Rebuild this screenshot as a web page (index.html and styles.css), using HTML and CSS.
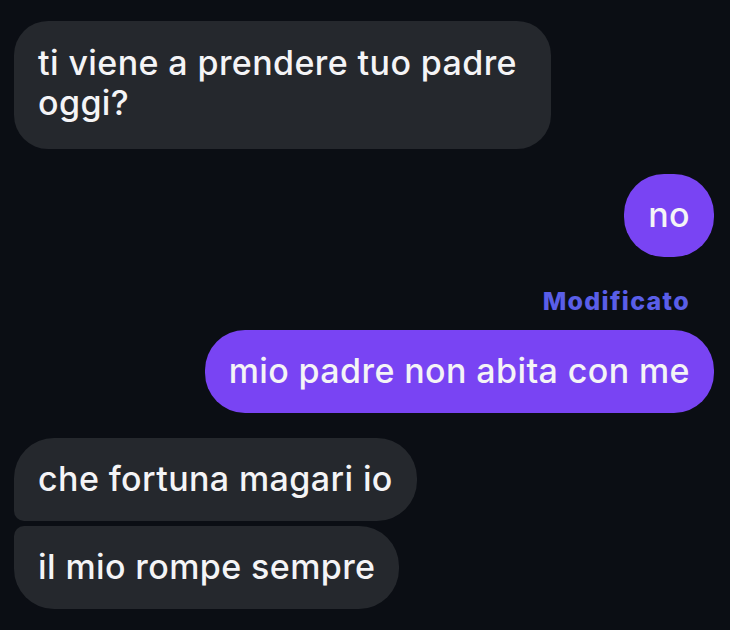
FILE: index.html
```html
<!DOCTYPE html>
<html lang="it">
<head>
<meta charset="utf-8">
<link rel="stylesheet" href="styles.css">
</head>
<body>
<div class="chat">
  <div class="bubble in single wide">ti viene a prendere tuo padre<br>oggi?</div>
  <div class="bubble out gap">no</div>
  <div class="edited">Modificato</div>
  <div class="bubble out">mio padre non abita con me</div>
  <div class="bubble in first gap">che fortuna magari io</div>
  <div class="bubble in last">il mio rompe sempre</div>
</div>
</body>
</html>
```
FILE: styles.css
```css
html, body {
  margin: 0;
  padding: 0;
  background: #0b0e14;
}
.chat {
  display: flex;
  flex-direction: column;
  padding: 21px 16px 0 14px;
  font-family: Inter, "Noto Sans", sans-serif;
  width: 730px;
  height: 630px;
  box-sizing: border-box;
}
.bubble {
  font-size: 34px;
  font-weight: 500;
  letter-spacing: 0.4px;
  line-height: 40px;
  color: #f4f4f6;
  padding: 21.5px 24px 21.5px 24px;
  border-radius: 40px;
}
.in {
  align-self: flex-start;
  background: #25282d;
}
.out {
  align-self: flex-end;
  background: #7944f3;
}
.wide {
  padding-right: 34px;
  padding-bottom: 26px;
  border-radius: 34px;
}
.gap {
  margin-top: 25px;
}
.first {
  border-bottom-left-radius: 10px;
}
.last {
  margin-top: 5px;
  border-top-left-radius: 10px;
}
.edited {
  align-self: flex-end;
  margin: 30px 24px 15px 0;
  color: #5a5ee8;
  font-weight: 800;
  font-size: 25px;
  letter-spacing: 1.3px;
  line-height: 28px;
}
```
